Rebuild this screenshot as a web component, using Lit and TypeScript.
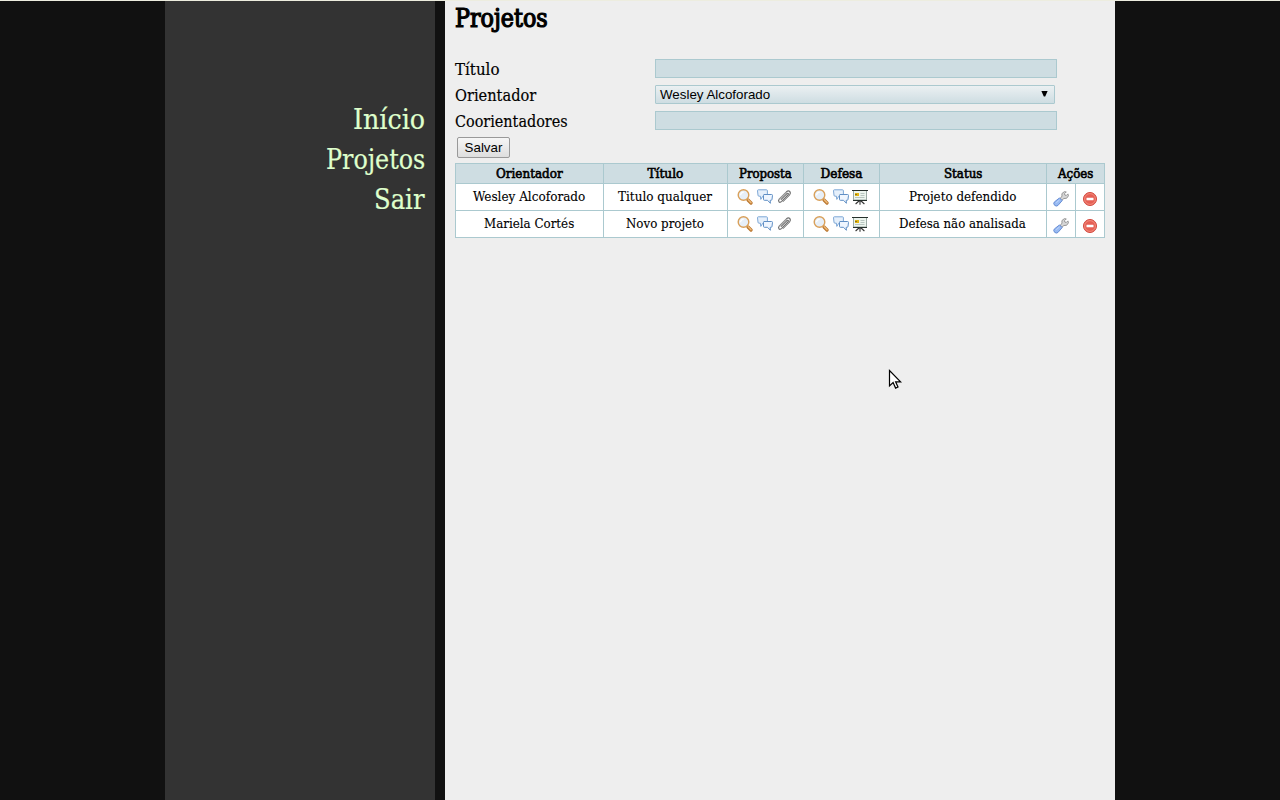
import { LitElement, html, css } from "lit";
import { customElement, property } from "lit/decorators.js";

/** Slab text that is scaled to occupy a given advance width. */
@customElement("slab-text")
class SlabText extends LitElement {
  @property() text = "";
  @property({ type: Number }) width = 0;

  static styles = css`
    :host { display: inline-block; white-space: pre; text-align: left; }
    .ink { display: inline-block; transform-origin: 0 50%; }
  `;

  updated() {
    const ink = this.renderRoot.querySelector(".ink") as HTMLElement;
    const natural = ink.offsetWidth;
    if (natural) ink.style.transform = `scaleX(${this.width / natural})`;
  }

  render() {
    return html`<span class="ink">${this.text}</span>`;
  }
}

const lens = html`<svg class="icon" width="16" height="16" viewBox="0 0 16 16">
  <path d="M11 11l3 3" stroke="#b8732c" stroke-width="3.200" stroke-linecap="round" />
  <path d="M11.200 10.800l2.800 2.800" stroke="#ecb877" stroke-width="1.500" stroke-linecap="round" />
  <circle cx="6.500" cy="6" r="5.300" fill="#e7eff8" stroke="#d9a05a" stroke-width="1.400" />
  <path d="M3.600 6.300a3.200 3.200 0 0 1 3.200-3.200" fill="none" stroke="#fff" stroke-width="1.300" />
</svg>`;

const chat = html`<svg class="icon" width="16" height="16" viewBox="0 0 16 16">
  <path d="M1.300.8h8.200q.9 0 .9.9v4.600q0 .9-.9.9H5.800l-2 3.200-.4-3.200H2Q1 7.200 1 6.200L.5 1.700Q.5.8 1.300.8z" fill="#e6f0fb" stroke="#7da7d6" />
  <path d="M7 5.500h7.600q.9 0 .9.9l-.5 4q-.1.900-1 .9h-.8l.2 3-2.900-3H7.400q-.900 0-.9-.900V6.400q0-.9.5-.9z" fill="#eff6ff" stroke="#608fc5" />
</svg>`;

const clip = html`<svg class="icon" width="16" height="16" viewBox="0 0 16 16">
  <g fill="none" stroke-linecap="round" stroke-linejoin="round">
    <path d="M5.200 10.300 10.700 4.800q1-.9 1.500-.3t-.2 1.500l-6.300 6.400q-1.700 1.500-2.700.4t.2-2.700l7.300-7.300q1.900-1.700 3.300-.3 1.300 1.500-.2 3.300l-6.300 6.300" stroke="#707070" stroke-width="1.200" />
    <path d="m3.200 10.400 7.300-7.300M6.200 12.800l6.500-6.500" stroke="#c4c4c4" stroke-width=".7" />
  </g>
</svg>`;

const board = html`<svg class="icon" width="16" height="16" viewBox="0 0 16 16">
  <path d="M8 11v4.800M7.500 11.500 3.600 15M8.500 11.500l3.900 3.500" stroke="#333" stroke-width="1.100" />
  <rect x="1.500" y="1.500" width="13" height="9.500" fill="#edf5ef" stroke="#9aaaa4" />
  <path d="M0 1.500h16M1 11.500h14" stroke="#26302c" />
  <rect x="3" y="4" width="4" height="3" fill="#e2b514" />
  <path d="M3 5.500h2" stroke="#8b741b" />
  <path d="M8.500 4.500h4M8.500 6.500h4M3 8.500h9.500" stroke="#a9bab4" stroke-width=".8" />
</svg>`;

const wrench = html`<svg class="icon" width="16" height="16" viewBox="0 0 16 16">
  <path d="m7.300 7.300 1.700-2.200-.1-2.500L11.300.7l2 .2-1.900 1.900.5 1.300 1.500.3 1.500-1.500.6 1.900-1.900 2.500-2.700.2-2.500 2.200z" fill="#d6d6d6" stroke="#8d8d8d" stroke-width=".9" />
  <path d="m6.500 6.900 2.700 2.700-4.300 4.900q-1.500 1.300-3.300-.2-1.600-1.800-.3-3.300z" fill="#98baf2" stroke="#5b83d0" stroke-width=".9" />
  <path d="M3.300 11.700 6.500 8.900" stroke="#c8dcfd" stroke-width=".8" />
</svg>`;

const remove = html`<svg class="icon" width="16" height="16" viewBox="0 0 16 16">
  <circle cx="8" cy="8" r="6.500" fill="#e65f55" stroke="#d2463c" />
  <circle cx="8" cy="8" r="5.400" fill="none" stroke="#f2917f" stroke-width=".9" />
  <rect x="4.500" y="6.700" width="7" height="2.600" rx=".4" fill="#fff" />
</svg>`;

const menu: [string, number][] = [["Início", 72], ["Projetos", 99], ["Sair", 51]];
const heads: [string, number][] = [
  ["Orientador", 67], ["Título", 36], ["Proposta", 53], ["Defesa", 42], ["Status", 38], ["Ações", 35],
];
const rows: [string, number][][] = [
  [["Wesley Alcoforado", 112], ["Titulo qualquer", 94], ["Projeto defendido", 107]],
  [["Mariela Cortés", 90], ["Novo projeto", 78], ["Defesa não analisada", 127]],
];

@customElement("app-root")
class AppRoot extends LitElement {
  static styles = css`
    :host {
      display: block; height: 800px; box-sizing: border-box; overflow: hidden;
      background: #111; border-top: 1px solid #ededdf; color: #000;
      font-family: "DejaVu Serif Condensed", "DejaVu Serif", serif; font-stretch: condensed;
    }
    .page { display: flex; gap: 10px; width: 950px; height: 799px; margin: 0 auto; }
    nav { width: 270px; background: #333; box-sizing: border-box; padding: 99px 10px 0 0;
      display: flex; flex-direction: column; align-items: flex-end; color: #dfffcc; font-size: 27px; -webkit-text-stroke: .2px #dfffcc; }
    nav a { height: 40px; line-height: 40px; display: flex; }
    main { width: 670px; background: #eee; box-sizing: border-box; padding: 0 10px; }
    h1 { margin: 0; height: 57px; line-height: 35px; font-size: 25.500px; font-weight: 400; -webkit-text-stroke: 1.200px #000; }
    .field { display: flex; height: 26px; font-size: 16px; -webkit-text-stroke: .15px #000; }
    .label { width: 200px; line-height: 23px; }
    .input { width: 402px; height: 19px; margin-top: 1px; box-sizing: border-box; background: #cedde2; border: 1px solid #abc9cf; }
    .select { width: 400px; border-radius: 1px; background: linear-gradient(#ebf0f2, #cedde2);
      display: flex; justify-content: space-between; align-items: center; padding: 0 6px 0 4px; -webkit-text-stroke: 0;
      font: 13.333px/17px "Liberation Sans", Arial, sans-serif; }
    .save { display: block; margin: 1px 0 5px 2px; width: 53px; height: 21px; padding: 0; box-sizing: border-box;
      border: 1px solid #999; border-radius: 2px; background: linear-gradient(#f6f6f6, #dedede);
      font: 13.333px/19px "Liberation Sans", Arial, sans-serif; text-align: center; color: #000; }
    .table { display: grid; grid-template-columns: 147px 123px 75px 75px 166px 28px 28px; grid-template-rows: 19px 26px 26px;
      gap: 1px; padding: 1px; width: 648px; background: #abc9cf; font-size: 13.500px; }
    .head, .cell { display: flex; justify-content: center; box-sizing: border-box; }
    .head { background: #cedde2; line-height: 19px; -webkit-text-stroke: .6px #000; }
    .head:nth-child(6) { grid-column: span 2; }
    .cell { background: #fff; line-height: 25px; }
    .name { padding-right: 1px; -webkit-text-stroke: .12px #000; }
    .tools { padding: 5px 0 0 9px; justify-content: flex-start; }
    .tools .icon + .icon { margin-left: 4px; }
    .tools .icon:last-child { margin-left: 3px; }
    .edit { padding-top: 7px; }
    .icon { display: block; flex: none; }
    .cursor { position: absolute; left: 888px; top: 369px; }
  `;

  render() {
    const t = ([s, w]: [string, number]) => html`<slab-text .text=${s} .width=${w} style="width:${w}px"></slab-text>`;
    return html`
      <div class="page">
        <nav>${menu.map((m) => html`<a>${t(m)}</a>`)}</nav>
        <main>
          <h1>${t(["Projetos", 93])}</h1>
          <div class="field"><span class="label">${t(["Título", 45])}</span><div class="input"></div></div>
          <div class="field"><span class="label">${t(["Orientador", 81])}</span>
            <div class="input select"><span>Wesley Alcoforado</span>
              <svg width="7" height="7" viewBox="0 0 7 7"><path d="M.4 0h6.200L4.200 5.500H2.800z" /></svg></div></div>
          <div class="field"><span class="label">${t(["Coorientadores", 113])}</span><div class="input"></div></div>
          <button class="save">Salvar</button>
          <div class="table">
            ${heads.map((h) => html`<div class="head">${t(h)}</div>`)}
            ${rows.map((r) => html`
              <div class="cell name">${t(r[0])}</div>
              <div class="cell name">${t(r[1])}</div>
              <div class="cell tools">${lens}${chat}${clip}</div>
              <div class="cell tools">${lens}${chat}${board}</div>
              <div class="cell name">${t(r[2])}</div>
              <div class="cell edit">${wrench}</div>
              <div class="cell edit">${remove}</div>`)}
          </div>
        </main>
      </div>
      <svg class="cursor" width="15" height="21" viewBox="0 0 15 21">
        <path d="M1.500 1.500v15.400l3.600-3.400 2.500 5.600 2.400-1.100-2.400-5.200h5z" fill="#fff" stroke="#000" stroke-width="1.200" />
      </svg>`;
  }
}
